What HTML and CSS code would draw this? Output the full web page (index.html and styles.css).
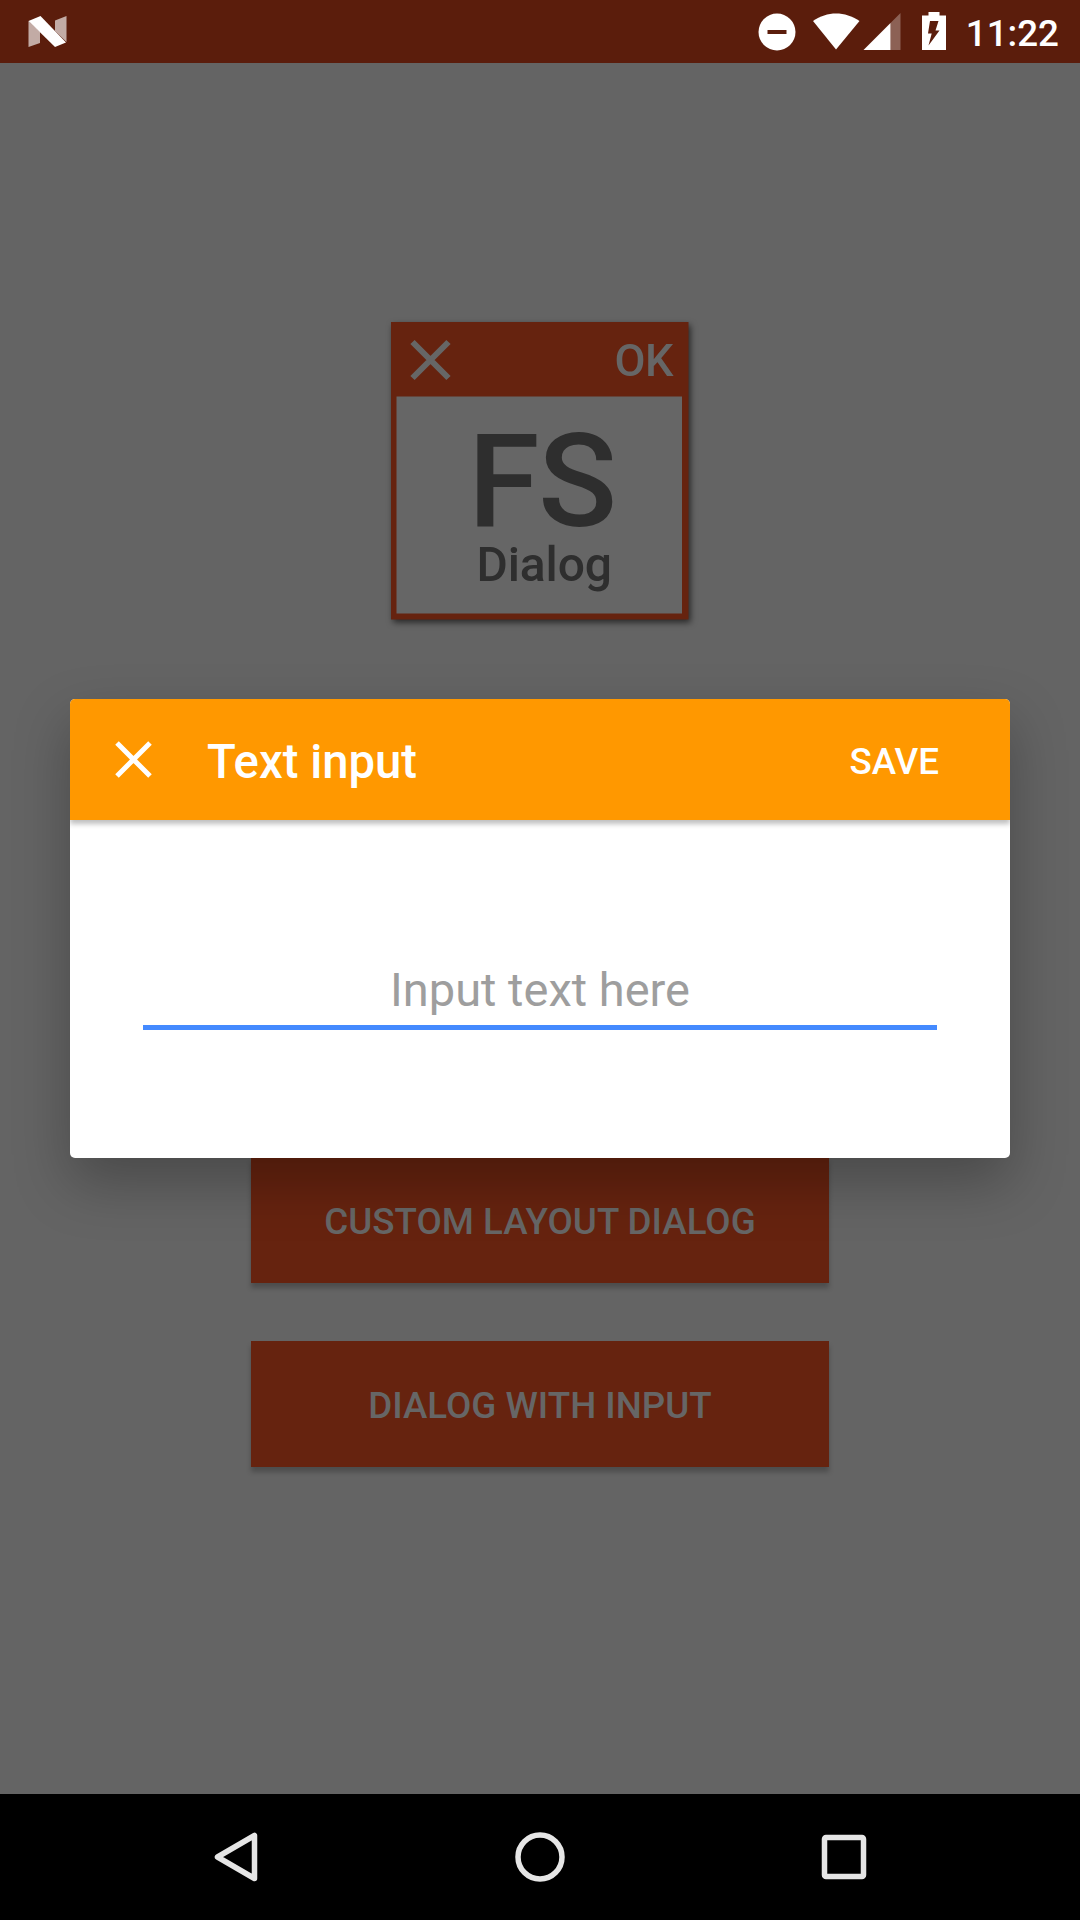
FILE: index.html
```html
<!DOCTYPE html>
<html lang="en">
<head>
<meta charset="utf-8">
<title>FS Dialog</title>
<link rel="stylesheet" href="styles.css">
</head>
<body>
<div class="screen">
  <header class="status-bar">
    <svg class="status-logo" width="40" height="32" viewBox="0 0 40 32">
      <path fill="#fff" fill-opacity=".63" d="M.5 5 12 16v11L.5 31zM27 4.500 38.500 0v26L27 15z"/>
      <path fill="#fff" d="M.5 5 12.500 0 38 26.500 27 31z"/>
    </svg>
    <svg class="status-icons" width="190" height="40" viewBox="0 0 190 40">
      <circle cx="19" cy="19" r="18.500" fill="#fff"/>
      <path fill="#5b1d0c" d="M9.500 17h19v4h-19z"/>
      <path fill="#fff" d="M55 8C69-2 87-2 101.500 8L78 36.500z"/>
      <path fill="#fff" fill-opacity=".3" d="M132.500 10 142.500 0v37h-10z"/>
      <path fill="#fff" d="M132.500 10v27H105.500z"/>
      <path fill="#fff" fill-rule="evenodd" d="M164 2.500h6.500V-1h11v3.500h6.500V37h-24zM172 8h8.500l-3 9.500h4L170.500 32.500l3.200-12h-3.700z"/>
    </svg>
    <span class="clock">11:22</span>
  </header>
  <main class="content">
    <svg class="app-logo" width="298" height="298" viewBox="0 0 298 298">
      <rect width="297.500" height="297.500" fill="#66230f"/>
      <rect x="5.500" y="74.500" width="285.500" height="217" fill="#666"/>
      <path d="M21.500 20 57.500 56M57.500 20 21.500 56" stroke="#666" stroke-width="6"/>
      <text class="logo-text logo-light" x="223.500" y="53.500" font-size="45" textLength="59">OK</text>
      <text class="logo-text" x="77" y="203.500" font-size="130" textLength="149">FS</text>
      <text class="logo-text" x="85.500" y="258.500" font-size="48" textLength="135.500">Dialog</text>
    </svg>
    <div class="actions">
      <button class="action">CUSTOM LAYOUT DIALOG</button>
      <button class="action">DIALOG WITH INPUT</button>
    </div>
  </main>
  <nav class="nav-bar">
    <svg width="50" height="50" viewBox="0 0 50 50"><path d="M43.500 3.500v43L6.500 25z"/></svg>
    <svg width="50" height="50" viewBox="0 0 50 50"><circle cx="25" cy="25" r="22"/></svg>
    <svg width="50" height="50" viewBox="0 0 50 50"><rect x="5.500" y="5.500" width="39" height="39" rx="1.500"/></svg>
  </nav>
  <section class="dialog">
    <div class="dialog-header">
      <svg class="close" width="38" height="38" viewBox="0 0 38 38"><path d="M3 2 36 35M36 2 3 35" stroke="#fff" stroke-width="5"/></svg>
      <h1 class="dialog-title">Text input</h1>
      <span class="save">SAVE</span>
    </div>
    <div class="dialog-body">
      <div class="field">Input text here</div>
    </div>
  </section>
</div>
</body>
</html>
```
FILE: styles.css
```css
* {
  box-sizing: border-box;
}

body {
  margin: 0;
  font-family: Roboto, "Liberation Sans", sans-serif;
}

.screen {
  position: relative;
  display: flex;
  flex-direction: column;
  width: 1080px;
  height: 1920px;
  overflow: hidden;
  background: #646464;
}

.status-bar {
  display: flex;
  align-items: flex-start;
  height: 63px;
  padding: 13px 21px 0 28px;
  background: #5b1d0c;
  color: #fff;
}

.status-logo {
  margin-top: 3px;
}

.status-icons {
  margin-left: auto;
  overflow: visible;
}

.clock {
  margin: 1px 0 0 18px;
  font-size: 36.75px;
  font-weight: 500;
  line-height: 40px;
}

.content {
  flex: 1;
  display: flex;
  flex-direction: column;
  align-items: center;
  justify-content: space-between;
  padding: 259px 0 327px;
}

.app-logo {
  filter: drop-shadow(2px 3px 3px rgba(0, 0, 0, 0.6));
}

.logo-text {
  font-weight: 500;
  fill: #2e2e2e;
}

.logo-light {
  fill: #666;
}

.actions {
  display: flex;
  flex-direction: column;
  gap: 58px;
  width: 578px;
}

.action {
  height: 126px;
  padding: 2px 0 0;
  border: 0;
  background: #66230f;
  box-shadow: 0 5px 5px rgba(0, 0, 0, 0.24);
  color: #666;
  font: 500 36.75px Roboto, "Liberation Sans", sans-serif;
}

.nav-bar {
  display: flex;
  align-items: center;
  justify-content: center;
  gap: 254px;
  height: 126px;
  background: #000;
}

.nav-bar svg {
  fill: none;
  stroke: #e6e6e6;
  stroke-width: 5.5;
  stroke-linejoin: round;
}

.dialog {
  position: absolute;
  top: 699px;
  left: 70px;
  width: 940px;
  height: 459px;
  border-radius: 5px;
  background: #fff;
  box-shadow: 0 24px 56px rgba(0, 0, 0, 0.27);
}

.dialog-header {
  display: flex;
  align-items: center;
  height: 121px;
  padding: 0 71px 0 44px;
  border-radius: 5px 5px 0 0;
  background: #ff9800;
  box-shadow: 0 4px 5px rgba(0, 0, 0, 0.25);
  clip-path: inset(0 0 -12px 0);
  color: #fff;
}

.dialog-title {
  margin: 4px 0 0 55px;
  font-size: 47.25px;
  font-weight: 500;
}

.save {
  margin: 4px 0 0 auto;
  font-size: 36.75px;
  font-weight: 500;
}

.dialog-body {
  padding: 126px 73px 0;
}

.field {
  height: 84px;
  padding-top: 16px;
  border-bottom: 5px solid #448aff;
  color: #9e9e9e;
  font-size: 47px;
  line-height: 55px;
  text-align: center;
}
```
